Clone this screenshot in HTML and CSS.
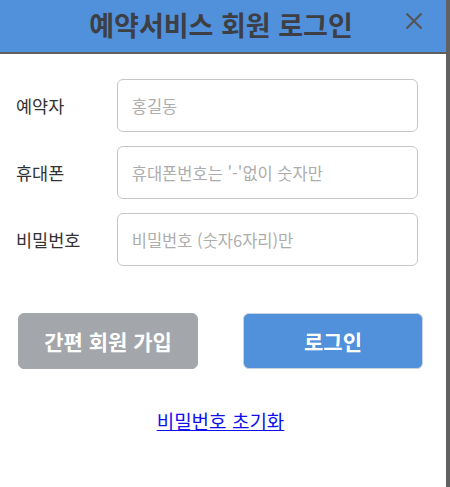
FILE: index.html
```html
<!DOCTYPE html>
<html lang="ko">

<head>
    <meta charset="UTF-8">
    <meta name="viewport" content="width=device-width, initial-scale=1.0">
    <title>예약서비스 회원 로그인</title>
    <link rel="stylesheet" href="styles.css">
</head>

<body>
    <div class="modal">
        <div class="modal-header">
            <h1 class="modal-title">예약서비스 회원 로그인</h1>
            <a class="modal-close" href="javascript:void(0)">
                <svg width="18" height="18" viewBox="0 0 18 18">
                    <path d="M1.5 1.5 L16.5 16.5 M16.5 1.5 L1.5 16.5" stroke="#555" stroke-width="2.2" fill="none" />
                </svg>
            </a>
        </div>

        <form class="login-form">
            <div class="form-row">
                <label for="name">예약자</label>
                <input type="text" id="name" placeholder="홍길동">
            </div>
            <div class="form-row">
                <label for="phone">휴대폰</label>
                <input type="text" id="phone" placeholder="휴대폰번호는 '-'없이 숫자만">
            </div>
            <div class="form-row">
                <label for="password">비밀번호</label>
                <input type="password" id="password" placeholder="비밀번호 (숫자6자리)만">
            </div>

            <div class="button-row">
                <button type="button" class="btn btn-join">간편 회원 가입</button>
                <button type="submit" class="btn btn-login">로그인</button>
            </div>
        </form>

        <div class="reset-link">
            <a href="javascript:void(0)">비밀번호 초기화</a>
        </div>
    </div>
</body>

</html>
```

FILE: styles.css
```css
body {
    margin: 0;
    background: #616161;
    font-family: "Noto Sans CJK KR", "Noto Sans", sans-serif;
    overflow: hidden;
}

.modal {
    width: 446px;
    height: 487px;
    background: white;
}

.modal-header {
    height: 52px;
    background: #5190db;
    border-bottom: 2px solid #606060;
    display: flex;
    align-items: center;
    justify-content: center;
    position: relative;
}

.modal-title {
    margin: -4px 0 0 -4px;
    font-size: 27px;
    font-weight: bold;
    color: #3d3f45;
}

.modal-close {
    position: absolute;
    right: 23px;
    top: 12px;
    display: block;
    line-height: 0;
}

.login-form {
    padding: 25px 28px 0 16px;
}

.form-row {
    display: flex;
    align-items: center;
    margin-bottom: 14px;
}

.form-row label {
    width: 101px;
    font-size: 17.5px;
    color: #333;
}

.form-row input {
    box-sizing: border-box;
    width: 302px;
    height: 53px;
    border: 1px solid #c6c6c6;
    border-radius: 6px;
    padding: 0 14px;
    font-family: inherit;
    font-size: 16.5px;
    color: #333;
}

.form-row input::placeholder {
    color: #adadad;
}

.button-row {
    display: flex;
    justify-content: space-between;
    margin-top: 47px;
    padding-left: 2px;
    margin-right: -5px;
}

.btn {
    box-sizing: border-box;
    width: 180px;
    height: 56px;
    border-radius: 6px;
    border: 1px solid transparent;
    color: white;
    font-family: inherit;
    font-size: 21px;
    font-weight: bold;
    cursor: pointer;
}

.btn-join {
    background: #a3a6aa;
    border-color: #a3a6aa;
}

.btn-login {
    background: #5190db;
    border-color: #c9d3de;
}

.reset-link {
    text-align: center;
    margin-top: 38px;
    padding-right: 5px;
}

.reset-link a {
    font-size: 19px;
    color: #1010ee;
}
```
